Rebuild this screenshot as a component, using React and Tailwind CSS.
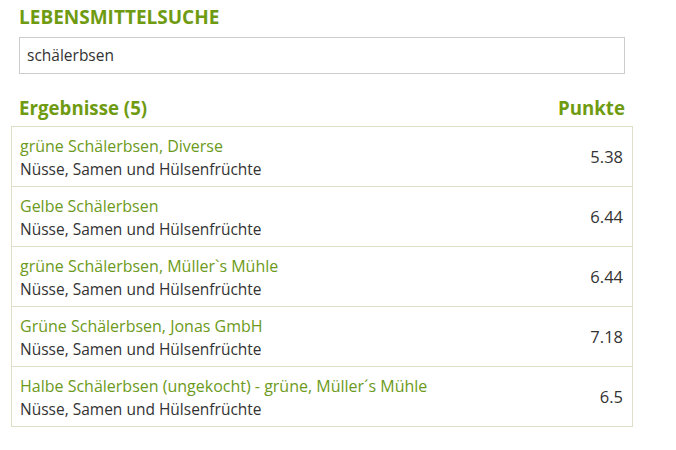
const results = [
  { name: "grüne Schälerbsen, Diverse", points: "5.38" },
  { name: "Gelbe Schälerbsen", points: "6.44" },
  { name: "grüne Schälerbsen, Müller`s Mühle", points: "6.44" },
  { name: "Grüne Schälerbsen, Jonas GmbH", points: "7.18" },
  { name: "Halbe Schälerbsen (ungekocht) - grüne, Müller´s Mühle", points: "6.5" },
];

export default function App() {
  return (
    <div className="min-h-screen bg-white text-[#333] font-['Open_Sans',sans-serif]">
      <div className="ml-[11px] w-[622px] pt-[5px]">
        <h1 className="px-2 text-[19px] font-bold leading-[24px] text-[#6f9b12]">LEBENSMITTELSUCHE</h1>
        <div className="mx-2 mt-[8px] h-[37px] border border-[#cccccc] flex items-center px-[7px] text-[15.5px]">
          schälerbsen
        </div>
        <div className="px-2 mt-[22px] flex items-end justify-between text-[18.7px] font-bold leading-[24px] text-[#6f9b12]">
          <span>Ergebnisse (5)</span>
          <span>Punkte</span>
        </div>
        <div className="mt-[6px] border border-[#dedfc6]">
          {results.map((r, i) => (
            <div
              key={i}
              className={`flex items-center justify-between h-[59px] pl-2 pr-[9px] ${i > 0 ? "border-t border-[#dedfc6] h-[60px]" : ""}`}
            >
              <div className="leading-[23px] pt-[2px]">
                <div className="text-[16px] text-[#6c9a20]">{r.name}</div>
                <div className="text-[15.5px]">Nüsse, Samen und Hülsenfrüchte</div>
              </div>
              <span className="text-[16.5px] pt-[2px]">{r.points}</span>
            </div>
          ))}
        </div>
      </div>
    </div>
  );
}
